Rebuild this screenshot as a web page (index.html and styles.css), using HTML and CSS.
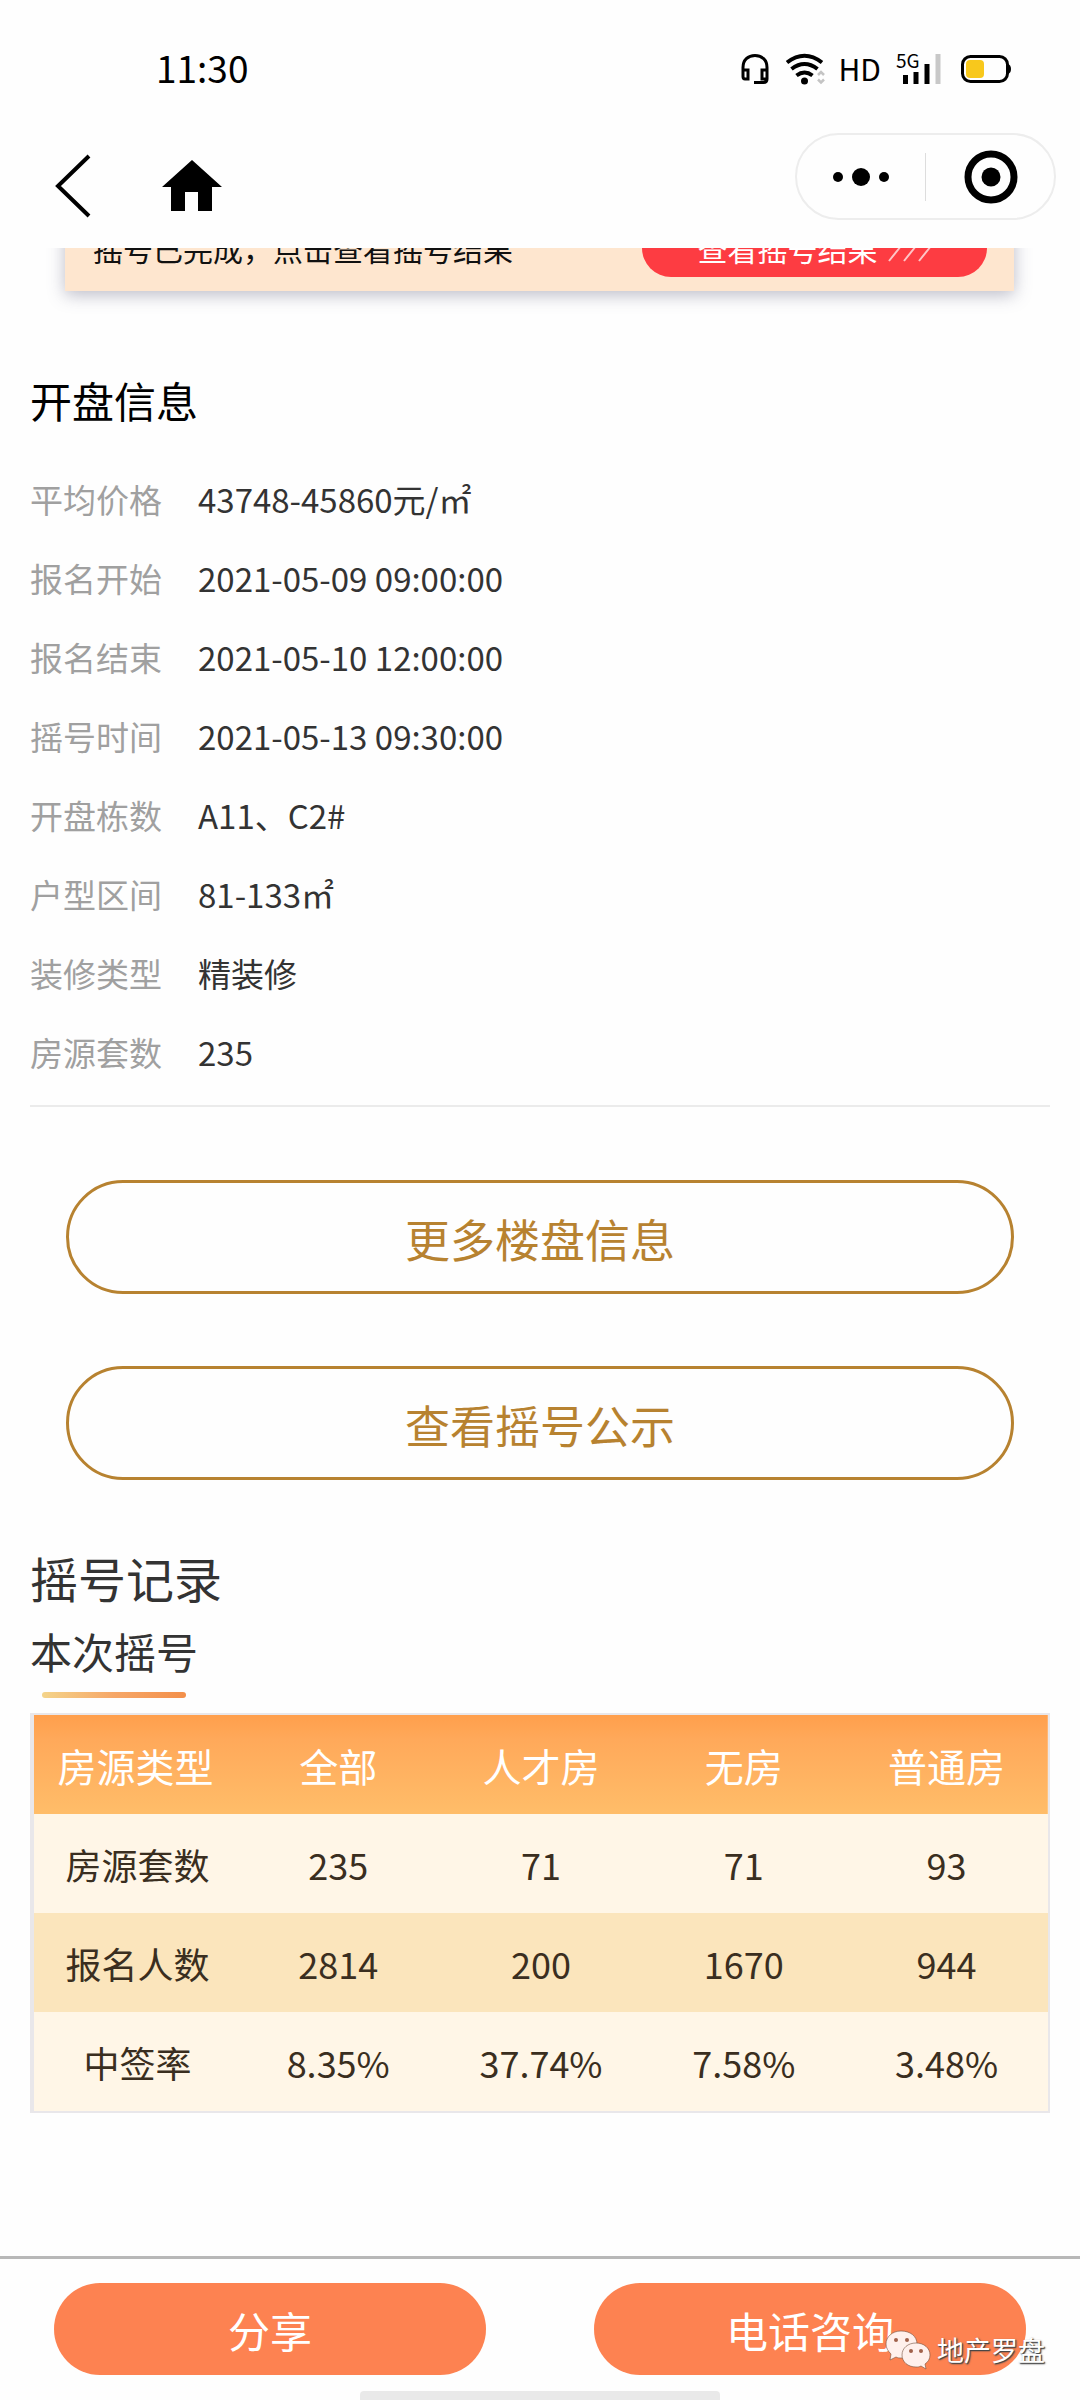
FILE: index.html
```html
<!DOCTYPE html>
<html lang="zh-CN">
<head>
<meta charset="utf-8">
<meta name="viewport" content="width=device-width, initial-scale=1">
<title>开盘信息</title>
<link rel="stylesheet" href="styles.css">
</head>
<body>
<div class="page">
  <header class="top">
    <div class="status">
      <time class="clock">11:30</time>
      <div class="status-icons">
        <svg width="30" height="32" viewBox="0 0 30 32" fill="none" stroke="#000" stroke-width="3" aria-hidden="true">
          <path d="M3 17V14.500C3 7 8 2.500 15 2.500S27 7 27 14.500V26Q27 29.500 23.500 29.500H14M3 17h5v9H5Q3 26 3 23.500ZM27 17h-5v9h5"/>
        </svg>
        <svg class="wifi" width="40" height="32" viewBox="0 0 40 32" fill="none" stroke="#000" stroke-width="4" aria-hidden="true">
          <path d="M2 9.500Q19.500-4 37 9.500M6.500 16Q19.500 6 32.500 16M11.500 22.500Q19.500 16.500 27.500 22.500"/>
          <circle cx="19.500" cy="28" r="3.500" fill="#000" stroke="none"/>
          <path d="M33 22l3-3 3 3M33 26.500l3 3 3-3" stroke="#c4c4c4" stroke-width="2.500"/>
        </svg>
        <span class="hd">HD</span>
        <svg class="signal" width="46" height="32" viewBox="0 0 46 32" aria-hidden="true">
          <g stroke-width="5" stroke="#000"><path d="M9.500 22v9M20 19v12M31 11v20"/><path d="M42 1v30" stroke="#c8c8c8"/></g>
          <text class="net" x="0" y="15">5G</text>
        </svg>
        <svg width="52" height="32" viewBox="0 0 52 32" aria-hidden="true">
          <rect x="2.500" y="3.500" width="45" height="25" rx="8" fill="none" stroke="#000" stroke-width="3"/>
          <rect x="6" y="7" width="18" height="18" rx="4" fill="#f8c81c"/>
          <path d="M48 11q3 1 3 5t-3 5z" fill="#000"/>
        </svg>
      </div>
    </div>
    <nav class="navbar">
      <div class="nav-left">
        <button class="icon-btn" type="button" aria-label="返回">
          <svg width="36" height="64" viewBox="0 0 36 64" fill="none" stroke="#000" stroke-width="4"><path d="M35 2 4 32 35 62"/></svg>
        </button>
        <button class="icon-btn" type="button" aria-label="首页">
          <svg width="60" height="52" viewBox="0 0 60 52"><path d="M30 0 60 27H50V51H36V32H23V51H9V27H0Z"/></svg>
        </button>
      </div>
      <div class="capsule">
        <button class="icon-btn cap-btn" type="button" aria-label="更多">
          <svg width="58" height="20" viewBox="0 0 58 20"><circle cx="6" cy="10" r="5"/><circle cx="29" cy="10" r="9"/><circle cx="52" cy="10" r="5"/></svg>
        </button>
        <span class="cap-line"></span>
        <button class="icon-btn cap-btn" type="button" aria-label="关闭">
          <svg width="54" height="54" viewBox="0 0 54 54"><circle cx="28" cy="27" r="23" fill="none" stroke="#000" stroke-width="7"/><circle cx="28" cy="27" r="9.500"/></svg>
        </button>
      </div>
    </nav>
  </header>

  <main class="content">
    <div class="banner">
      <span>摇号已完成，点击查看摇号结果</span>
      <a class="result-link" href="#record">查看摇号结果
        <svg width="44" height="28" viewBox="0 0 44 28" fill="none" stroke="#fff" stroke-opacity=".7" stroke-width="2" aria-hidden="true"><path d="M1 27 13 12M16 27 28 12M31 27 43 12"/></svg>
      </a>
    </div>

    <section class="info">
      <h2 class="title">开盘信息</h2>
      <dl class="facts">
        <dt>平均价格</dt><dd>43748-45860元/㎡</dd>
        <dt>报名开始</dt><dd>2021-05-09 09:00:00</dd>
        <dt>报名结束</dt><dd>2021-05-10 12:00:00</dd>
        <dt>摇号时间</dt><dd>2021-05-13 09:30:00</dd>
        <dt>开盘栋数</dt><dd>A11、C2#</dd>
        <dt>户型区间</dt><dd>81-133㎡</dd>
        <dt>装修类型</dt><dd>精装修</dd>
        <dt>房源套数</dt><dd>235</dd>
      </dl>
    </section>

    <div class="links">
      <button class="outline-btn" type="button">更多楼盘信息</button>
      <button class="outline-btn" type="button">查看摇号公示</button>
    </div>

    <section class="record" id="record">
      <h2 class="record-title">摇号记录</h2>
      <h3 class="tab">本次摇号</h3>
      <table class="rates">
        <thead>
          <tr><th scope="col">房源类型</th><th scope="col">全部</th><th scope="col">人才房</th><th scope="col">无房</th><th scope="col">普通房</th></tr>
        </thead>
        <tbody>
          <tr><th scope="row">房源套数</th><td>235</td><td>71</td><td>71</td><td>93</td></tr>
          <tr><th scope="row">报名人数</th><td>2814</td><td>200</td><td>1670</td><td>944</td></tr>
          <tr><th scope="row">中签率</th><td>8.35%</td><td>37.74%</td><td>7.58%</td><td>3.48%</td></tr>
        </tbody>
      </table>
    </section>
  </main>

  <footer class="actions">
    <button class="solid-btn" type="button">分享</button>
    <button class="solid-btn" type="button">电话咨询</button>
    <span class="home-bar"></span>
    <div class="mark">
      <svg width="46" height="40" viewBox="0 0 46 40" aria-hidden="true">
        <g fill="#fff0ec" stroke="#75513f" stroke-opacity=".6">
          <path d="M16 1C7 1 1 7 1 14c0 4 2 7 5 10l-1 6 6-3c2 1 3 1 6 1 8 0 15-6 15-14S25 1 16 1Z"/>
          <path d="M31 13c-8 0-14 5-14 12s6 12 14 12c2 0 3 0 5-1l5 3-1-5c3-2 5-5 5-9 0-7-6-12-14-12Z"/>
        </g>
        <g fill="#a0604a"><circle cx="11" cy="10" r="2"/><circle cx="22" cy="10" r="2"/><circle cx="26" cy="21" r="2"/><circle cx="36" cy="21" r="2"/></g>
      </svg>
      <span>地产罗盘</span>
    </div>
  </footer>
</div>
</body>
</html>
```
FILE: styles.css
```css
* { box-sizing: border-box; }

body {
  margin: 0;
  background: #fefefe;
  color: #333;
  font-family: "Noto Sans CJK SC", "Noto Sans", sans-serif;
  font-weight: 400;
}

button {
  margin: 0;
  padding: 0;
  border: 0;
  background: none;
  font: inherit;
  cursor: pointer;
}

h2, h3, dl, dd { margin: 0; font-weight: inherit; }
svg { display: block; flex: none; overflow: visible; }

.page {
  display: flex;
  flex-direction: column;
  min-height: 100vh;
}

/* Status bar and navigation */
.top {
  position: relative;
  z-index: 1;
  height: 248px;
  background: #fefefe;
}

.status {
  display: flex;
  align-items: center;
  justify-content: space-between;
  height: 133px;
  padding: 5px 68px 0 156px;
}

.clock {
  padding-bottom: 4px;
  color: #000;
  font-size: 37px;
  line-height: 40px;
}

.status-icons {
  display: flex;
  align-items: center;
  gap: 15px;
}

.wifi { margin-right: -1px; }
.signal { margin-right: 3px; }

.hd {
  padding-bottom: 3px;
  color: #000;
  font-size: 30px;
  line-height: 32px;
}

.net { font-size: 19px; }

.navbar {
  display: flex;
  justify-content: space-between;
  padding: 0 24px 0 54px;
}

.nav-left {
  display: flex;
  align-items: center;
  gap: 72px;
  height: 106px;
}

.capsule {
  display: flex;
  align-items: center;
  width: 261px;
  height: 87px;
  border: 2px solid #ededed;
  border-radius: 44px;
}

.icon-btn { display: flex; align-items: center; justify-content: center; }
.cap-btn { flex: 1; height: 100%; }
.cap-line { width: 1px; height: 48px; background: #ddd; }

/* Result banner, partly scrolled under the header */
.content { padding: 0 30px; }

.banner {
  display: flex;
  align-items: center;
  justify-content: space-between;
  height: 86px;
  margin: -43px 36px 0 35px;
  padding: 0 27px 0 28px;
  background: #fee6cf;
  box-shadow: 0 4px 16px rgba(90, 90, 120, .4);
  color: #111;
  font-size: 30px;
  line-height: 44px;
}

.result-link {
  display: flex;
  align-items: center;
  justify-content: center;
  gap: 10px;
  width: 345px;
  height: 58px;
  border-radius: 29px;
  background: #fd3c42;
  color: #fff;
  text-decoration: none;
}

/* Opening details */
.info {
  padding: 79px 0 13px;
  border-bottom: 2px solid #ebebeb;
}

.title {
  color: #000;
  font-size: 42px;
  line-height: 60px;
}

.facts {
  display: grid;
  grid-template-columns: 168px 1fr;
  margin-top: 30px;
  font-size: 33px;
  line-height: 79px;
}

.facts dt { color: #a0a0a0; }

.links {
  display: grid;
  gap: 72px;
  padding: 73px 36px 0;
}

.outline-btn {
  height: 114px;
  padding-top: 3px;
  border: 3px solid #b78230;
  border-radius: 57px;
  color: #b78230;
  font-size: 45px;
}

/* Lottery record */
.record { padding-top: 61px; }

.record-title {
  font-size: 48px;
  line-height: 72px;
}

.tab {
  width: max-content;
  font-size: 42px;
  line-height: 75px;
}

.tab::after {
  content: "";
  display: block;
  height: 6px;
  margin: 4px 12px 0;
  border-radius: 3px;
  background: linear-gradient(90deg, #f4d48a, #f6a768 50%, #f38f4a);
}

.rates {
  width: 100%;
  margin-top: 15px;
  border: solid #e9e7ea;
  border-width: 2px 2px 2px 4px;
  border-collapse: separate;
  border-spacing: 0;
  table-layout: fixed;
  text-align: center;
}

.rates th, .rates td { height: 99px; padding: 0; font-weight: inherit; }
.rates thead { background: linear-gradient(#ff9f4c, #ffa95a 25%, #ffbd69); color: #fff; }
.rates thead th { font-size: 39px; }
.rates tbody { color: #3a2e20; font-size: 36px; }
.rates tbody th { padding-left: 4px; }
.rates tbody tr { background: #fff6e7; }
.rates tbody tr:nth-child(2) { background: #fbe5bc; }

/* Bottom actions */
.actions {
  position: relative;
  display: flex;
  gap: 108px;
  height: 144px;
  margin-top: auto;
  padding: 24px 54px 0;
  border-top: 3px solid #b8b8b8;
}

.solid-btn {
  flex: 1;
  height: 92px;
  border-radius: 46px;
  background: #fd8251;
  color: #fff;
  font-size: 42px;
}

.home-bar {
  position: absolute;
  bottom: 0;
  left: 50%;
  width: 360px;
  height: 9px;
  margin-left: -180px;
  border-radius: 4px 4px 0 0;
  background: #e9e9e9;
}

.mark {
  position: absolute;
  right: 35px;
  bottom: 30px;
  display: flex;
  align-items: center;
  gap: 6px;
  color: #fff;
  font-size: 27px;
  line-height: 40px;
  text-shadow: 1px 1px 1px #444, 1px 1px 2px #555;
}
```
